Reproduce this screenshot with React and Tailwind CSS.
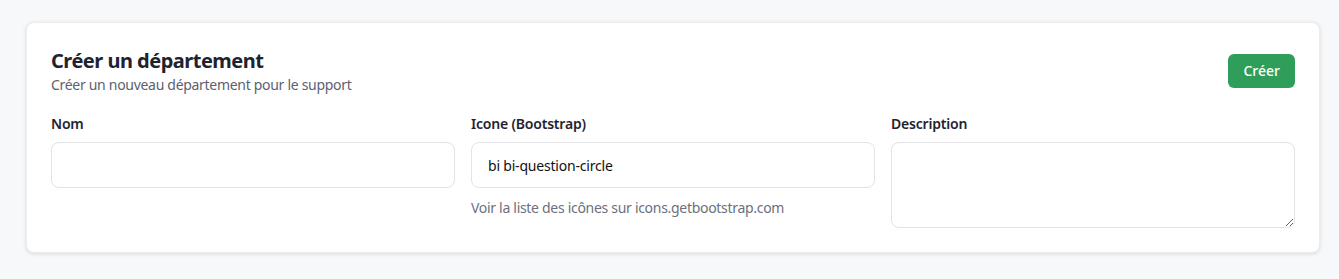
import React from 'react';

const App = () => {
  return (
    <div
      className="min-h-screen bg-[#f7f8fa] pl-[26px] pt-[22px] pb-6"
      style={{ fontFamily: '"Noto Sans", "Open Sans", sans-serif' }}
    >
      <div className="bg-white rounded-lg border border-[#ececef] shadow-[0_1px_4px_rgba(0,0,0,0.12)] p-6 w-[1294px]">
        {/* Header */}
        <div className="flex items-center justify-between">
          <div>
            <h2 className="text-xl leading-7 font-bold text-[#1f2330] tracking-[-0.5px]">Créer un département</h2>
            <p className="text-sm leading-5 text-[#5b6170] tracking-[-0.3px]">Créer un nouveau département pour le support</p>
          </div>
          <button className="bg-[#2f9e5b] text-white text-sm font-medium px-[15px] h-[34px] rounded-md">
            Créer
          </button>
        </div>

        {/* Fields */}
        <div className="grid grid-cols-3 gap-4 mt-[19px]">
          <div>
            <label className="block text-sm leading-5 font-semibold text-[#1f2330] mb-2 tracking-[-0.2px]">Nom</label>
            <input
              type="text"
              className="w-full h-[46px] border border-[#e3e3e6] rounded-lg px-4 text-sm outline-none"
            />
          </div>
          <div>
            <label className="block text-sm leading-5 font-semibold text-[#1f2330] mb-2 tracking-[-0.2px]">Icone (Bootstrap)</label>
            <input
              type="text"
              defaultValue="bi bi-question-circle"
              className="w-full h-[46px] border border-[#e3e3e6] rounded-lg px-4 text-sm text-[#111] outline-none tracking-[-0.2px]"
            />
            <p className="text-sm leading-5 text-[#6b7080] mt-[10px] tracking-[-0.3px]">Voir la liste des icônes sur icons.getbootstrap.com</p>
          </div>
          <div>
            <label className="block text-sm leading-5 font-semibold text-[#1f2330] mb-2 tracking-[-0.2px]">Description</label>
            <textarea
              className="block w-full h-[86px] border border-[#e3e3e6] rounded-lg px-4 py-3 text-sm outline-none"
            />
          </div>
        </div>
      </div>
    </div>
  );
};

export default App;
